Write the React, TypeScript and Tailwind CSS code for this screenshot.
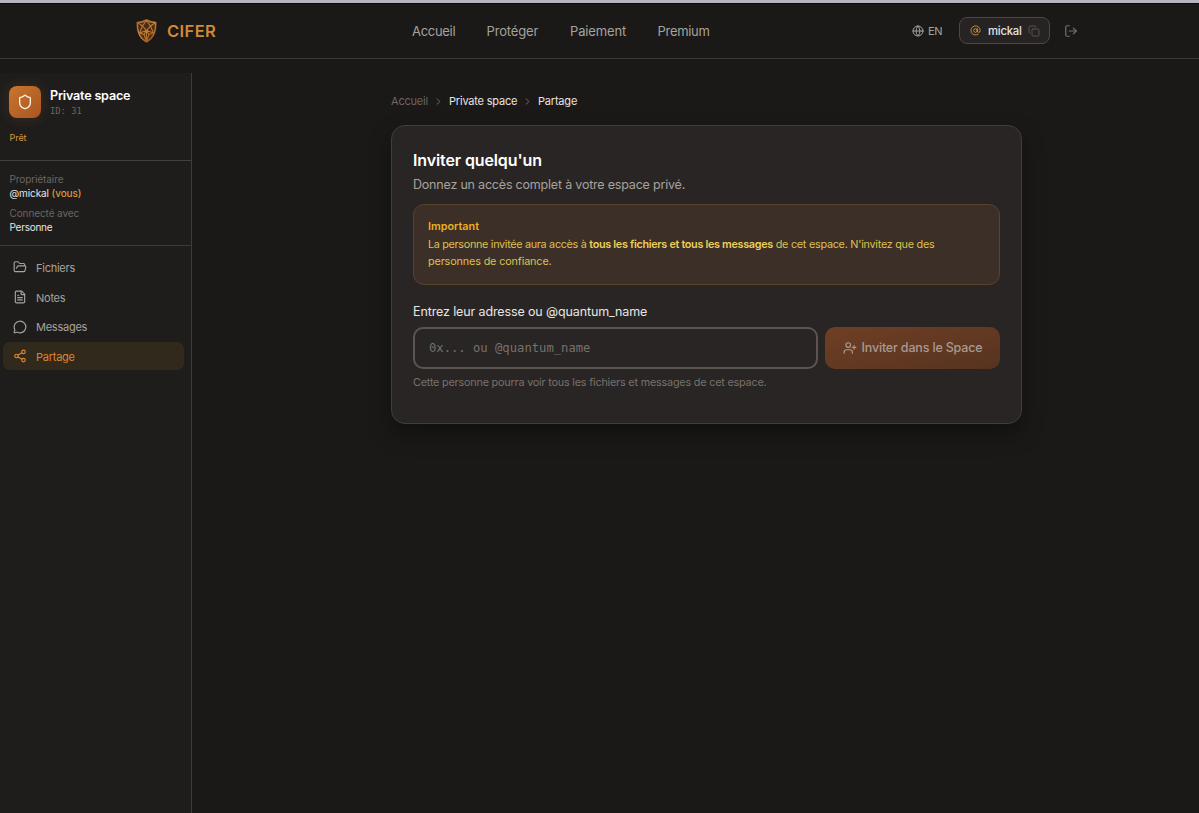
import React from "react";
import { FolderOpen, FileText, MessageCircle, Share2, Shield, Globe, AtSign, Copy, LogOut, ChevronRight, UserPlus } from "lucide-react";

function Logo() {
  return (
    <svg className="ml-[0.500px] h-[24px] w-[21px]" viewBox="0 0 21 24" fill="none" stroke="url(#gold)" strokeLinejoin="round">
      <defs>
        <linearGradient id="gold" x1="0" y1="0" x2="21" y2="24" gradientUnits="userSpaceOnUse">
          <stop stopColor="#a8652b" />
          <stop offset="0.5" stopColor="#c5812f" />
          <stop offset="1" stopColor="#8a4a20" />
        </linearGradient>
      </defs>
      <path d="M10.5 1C7.5 2.8 4.500 3.400 1.300 3.400c0 7.600 .9 15 9.200 19.400C18.800 18.400 19.700 11 19.700 3.400 16.500 3.400 13.500 2.800 10.500 1Z" fill="#4a2c18" strokeWidth="1.500" />
      <path d="M10.500 1.500 6.500 7l4 4.500L14.500 7 10.500 1.500ZM1.500 3.500 6.500 7 3.500 14l7-2.500 7 2.500L14.500 7l5-3.500M3.500 14l4.500 1.500 2.500 7 2.500-7 4.500-1.500M8 15.500l2.500-4L13 15.500M10.500 11.500v11" strokeWidth="1.100" />
    </svg>
  );
}

const nav = [
  { label: "Accueil", cls: "w-[43px] tracking-[-0.300px]" },
  { label: "Protéger", cls: "w-[52px] tracking-[-0.150px]" },
  { label: "Paiement", cls: "w-[56px] tracking-[-0.150px]" },
  { label: "Premium", cls: "w-[52px] tracking-[-0.300px]" },
];

const items = [
  { label: "Fichiers", Icon: FolderOpen, cls: "text-[#a8a29e]" },
  { label: "Notes", Icon: FileText, cls: "text-[#a8a29e]" },
  { label: "Messages", Icon: MessageCircle, cls: "text-[#a8a29e]" },
  { label: "Partage", Icon: Share2, cls: "bg-[#32291d] text-[#d9862f]" },
];

export default function App() {
  return (
    <div className="flex h-[813px] w-[1199px] flex-col overflow-hidden whitespace-nowrap bg-[#1a1917] font-['Inter',sans-serif]">
      <div className="h-[4px] shrink-0 border-b border-[#0d0b12] bg-[#b9b3c0]" />
      <header className="flex h-[55px] shrink-0 items-center border-b border-[#3a3937] pb-[1px] pl-[135px]">
        <div className="flex w-[277px] items-center gap-[10.500px]">
          <Logo />
          <span className="pt-[2px] text-[16.500px] font-semibold tracking-[0.400px] text-[#d08a35]">CIFER</span>
        </div>
        <nav className="flex w-[500px] gap-[31.500px] pt-[2px] text-[13px] text-[#a8a29e]">
          {nav.map((n) => (
            <a key={n.label} className={n.cls}>{n.label}</a>
          ))}
        </nav>
        <div className="flex w-[47px] items-center gap-[4px] text-[11px] text-[#a8a29e]">
          <Globe className="size-[12px]" />
          <span className="pt-[2px] tracking-[-0.300px]">EN</span>
        </div>
        <div className="flex h-[27px] w-[91px] items-center rounded-[8px] border border-[#4c4845] bg-[#262322] pl-[10px] text-[11.300px] font-medium text-[#e7e5e4]">
          <AtSign className="mr-[7px] size-[11px] text-[#d9952f]" />
          <span className="w-[34px] pt-[2px] tracking-[-0.250px]">mickal</span>
          <Copy className="ml-[6px] size-[12px] text-[#57534e]" />
        </div>
        <LogOut className="ml-[14px] size-[14px] text-[#78716c]" />
      </header>

      <div className="flex min-h-0 flex-1">
        <aside className="mt-[14px] w-[192px] shrink-0 border-r border-[#3d3b39] bg-[#1e1d1c]">
          <section className="h-[88px] border-b border-[#44403d] pl-[9.400px] pt-[13.400px]">
            <div className="flex gap-[8.600px]">
              <div className="flex size-[32px] items-center justify-center rounded-[8px] bg-linear-to-br from-[#c9762d] to-[#a85524] text-[#fff3e4] shadow-[0_0_14px_rgba(200,110,40,0.200)]">
                <Shield className="size-[16px]" />
              </div>
              <div className="pt-[2px]">
                <div className="text-[12.600px] font-semibold leading-[16px] tracking-[-0.200px] text-white">Private space</div>
                <div className="font-['DejaVu_Sans_Mono',monospace] text-[8.800px] leading-[14px] text-[#6b6661]">ID: 31</div>
              </div>
            </div>
            <div className="mt-[14px] text-[9px] leading-[12px] text-[#d9993c]">Prêt</div>
          </section>
          <section className="h-[85px] border-b border-[#3d3b39] pl-[9.500px] pt-[11px] text-[10px] leading-[14px] tracking-[-0.100px] text-[#e7e5e4]">
            <div className="text-[#6b6661]">Propriétaire</div>
            <div>@mickal <span className="font-medium text-[#d9993c]">(vous)</span></div>
            <div className="mt-[6px] text-[#6b6661]">Connecté avec</div>
            <div className="tracking-[-0.250px]">Personne</div>
          </section>
          <nav className="flex flex-col gap-[1.750px] pl-[3px] pr-[7px] pt-[7px]">
            {items.map(({ label, Icon, cls }) => (
              <a key={label} className={`flex h-[28px] items-center gap-[9px] rounded-[7px] pl-[10px] text-[11px] ${cls}`}>
                <Icon className="size-[14px]" />
                <span className="pt-[2px] tracking-[-0.250px]">{label}</span>
              </a>
            ))}
          </nav>
        </aside>

        <main className="pl-[199px] pt-[34px]">
          <div className="flex h-[16px] items-center text-[11px] tracking-[-0.200px] text-[#e7e5e4]">
            <span className="w-[37px] text-[#6b6661]">Accueil</span>
            <ChevronRight className="mx-[5px] size-[11px] text-[#78716c]" />
            <span className="w-[68px]">Private space</span>
            <ChevronRight className="mx-[5px] size-[11px] text-[#78716c]" />
            <span>Partage</span>
          </div>
          <section className="mt-[16px] h-[299px] w-[631px] rounded-[14px] border border-[#403d3b] bg-[#292524] px-[21px] pt-[24px] shadow-[0_10px_22px_rgba(0,0,0,0.350)]">
            <h1 className="text-[16px] font-semibold leading-[20px] tracking-[-0.120px] text-white">Inviter quelqu'un</h1>
            <p className="mt-[6px] text-[12.500px] leading-[18px] tracking-[-0.200px] text-[#a8a29e]">Donnez un accès complet à votre espace privé.</p>
            <div className="mt-[9.500px] h-[81px] rounded-[11px] border border-[#5a432b] bg-[#3b2f27] pl-[14px] pt-[13px] text-[10.800px] leading-[17px] text-[#dfc050]">
              <div className="font-semibold leading-[18px] text-[#eab020]">Important</div>
              <div className="pt-[0.500px] tracking-[-0.300px]">La personne invitée aura accès à <b className="font-semibold text-[#ecd05a]">tous les fichiers et tous les messages</b> <span className="tracking-[-0.250px]">de cet espace. N'invitez que des</span></div>
              <div className="tracking-[-0.130px]">personnes de confiance.</div>
            </div>
            <label className="mt-[18px] block text-[12.500px] leading-[18px] tracking-[-0.120px] text-[#e7e5e4]">Entrez leur adresse ou @quantum_name</label>
            <div className="mt-[6.500px] flex gap-[7px]">
              <input className="h-[42px] w-[405px] rounded-[10px] border-2 border-[#5a5551] bg-transparent px-[14px] font-['DejaVu_Sans_Mono',monospace] text-[12.200px] placeholder:text-[#78716c]" placeholder="0x... ou @quantum_name" />
              <button className="flex h-[42px] w-[175px] items-center gap-[5px] rounded-[10px] bg-linear-to-br from-[#6f3f24] to-[#573320] pl-[17.500px] text-[12.500px] font-medium tracking-[-0.170px] text-[#a89a90]">
                <UserPlus className="size-[14px]" />
                <span className="pt-[1px]">Inviter dans le Space</span>
              </button>
            </div>
            <p className="mt-[5.500px] text-[10.800px] leading-[16px] tracking-[-0.190px] text-[#78716c]">Cette personne pourra voir tous les fichiers et messages de cet espace.</p>
          </section>
        </main>
      </div>
    </div>
  );
}
